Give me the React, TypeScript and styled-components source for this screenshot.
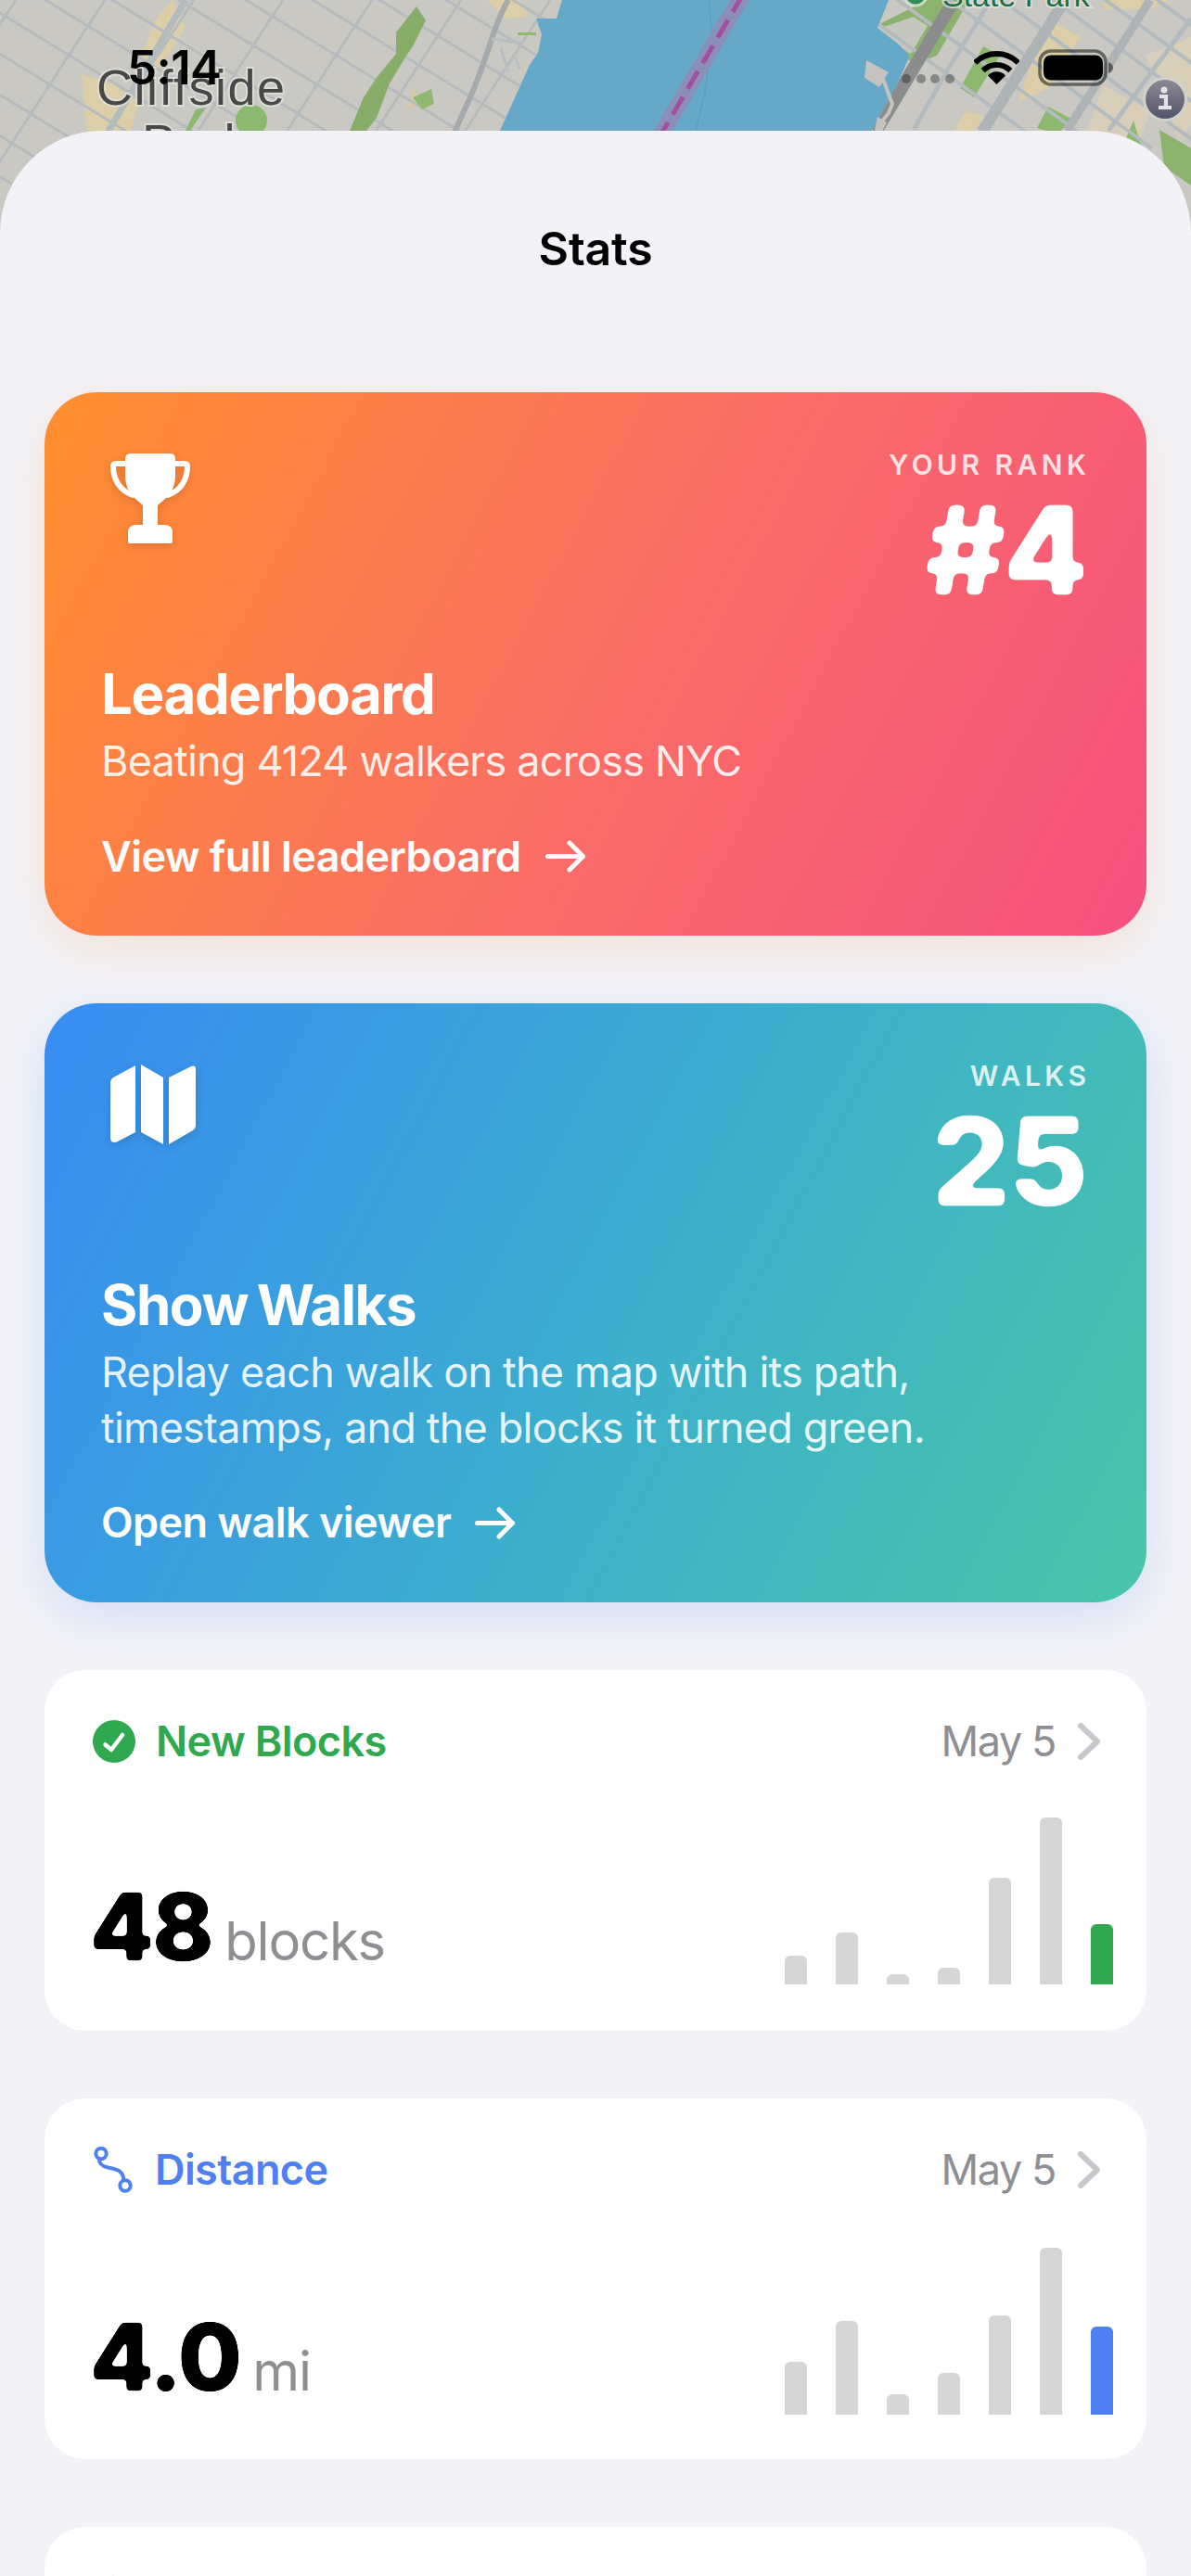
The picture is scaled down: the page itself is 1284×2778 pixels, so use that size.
import React from "react";
import styled, { createGlobalStyle } from "styled-components";

const Global = createGlobalStyle`
  html, body { margin: 0; padding: 0; background: #f2f2f7; }
  body { font-family: Inter, "Liberation Sans", sans-serif; -webkit-font-smoothing: antialiased; }
  #root { width: 1284px; height: 2778px; overflow: hidden; }
`;

const Page = styled.div`
  position: relative;
  width: 1284px;
  height: 2778px;
  overflow: hidden;
  background: #f2f2f7;
`;

const MapLayer = styled.svg`
  position: absolute;
  left: 0;
  top: 0;
`;

const FilterDefs = styled.svg`
  position: absolute;
  width: 0;
  height: 0;
`;

const StatusBar = styled.header`
  position: relative;
  height: 141px;
  box-sizing: border-box;
  padding: 43px 83px 0 137px;
  display: flex;
  justify-content: space-between;
  align-items: flex-start;
`;

const Time = styled.span`
  font-size: 51px;
  font-weight: 600;
  line-height: 60px;
  letter-spacing: -0.6px;
  color: #000;
`;

const StatusIcons = styled.div`
  display: flex;
  align-items: flex-start;
  margin-top: 10px;
`;

const Dots = styled.svg`
  margin: 26px 21px 0 0;
`;

const Wifi = styled.svg`
  margin-right: 20px;
`;

const Sheet = styled.main`
  position: relative;
  background: #f2f2f7;
  border-radius: 110px 110px 0 0;
  padding: 0 48px;
`;

const SheetTitle = styled.h1`
  margin: 0;
  padding-top: 97px;
  height: 282px;
  box-sizing: border-box;
  text-align: center;
  font-size: 50px;
  line-height: 60px;
  font-weight: 600;
  letter-spacing: -0.2px;
  color: #000;
`;

const CardStack = styled.div`
  display: flex;
  flex-direction: column;
  gap: 73px;
`;

const HeroCard = styled.section<{ $from: string; $via: string; $to: string; $glow: string }>`
  border-radius: 56px;
  padding: 60px 65px 58.5px 61px;
  background: linear-gradient(118deg, ${(p) => p.$from}, ${(p) => p.$via} 55%, ${(p) => p.$to});
  box-shadow: 0 16px 50px ${(p) => p.$glow};
  color: #fff;
`;

const HeroTop = styled.div`
  display: flex;
  justify-content: space-between;
  align-items: flex-start;
`;

const HeroIcon = styled.svg`
  margin: 6px 0 0 10px;
  filter: drop-shadow(0 3px 5px rgba(0, 0, 0, 0.14));
`;

const HeroMetric = styled.div`
  display: flex;
  flex-direction: column;
  align-items: flex-end;
`;

const MetricLabel = styled.span`
  font-size: 30px;
  line-height: 36px;
  font-weight: 600;
  letter-spacing: 4.4px;
  margin-right: -4.4px;
  color: rgba(255, 255, 255, 0.82);
`;

const MetricValue = styled.span`
  font-size: 132px;
  line-height: 110px;
  font-weight: 800;
  letter-spacing: -2px;
  margin-top: 19px;
  filter: url(#rounded);
`;

const HeroTitle = styled.h2`
  margin: 64px 0 7px;
  font-size: 60px;
  line-height: 72px;
  font-weight: 700;
  letter-spacing: -1.4px;
  word-spacing: -3px;
`;

const HeroText = styled.p`
  margin: 0;
  font-size: 45px;
  line-height: 59.5px;
  font-weight: 400;
  letter-spacing: -0.8px;
  color: rgba(255, 255, 255, 0.88);
`;

const HeroLink = styled.div`
  margin-top: 46px;
  display: flex;
  align-items: center;
  gap: 26px;
  font-size: 45px;
  line-height: 54px;
  font-weight: 600;
  letter-spacing: -0.55px;
`;

const StatCard = styled.section<{ $bottom: number }>`
  height: 389px;
  box-sizing: border-box;
  background: #fff;
  border-radius: 44px;
  padding: 50px 36px ${(p) => p.$bottom}px 52px;
  display: flex;
  flex-direction: column;
  justify-content: space-between;
`;

const StatHeader = styled.div`
  display: flex;
  justify-content: space-between;
  align-items: center;
  margin-right: 14px;
  height: 54px;
`;

const StatName = styled.div<{ $color: string }>`
  display: flex;
  align-items: center;
  gap: 22px;
  font-size: 45px;
  line-height: 54px;
  font-weight: 600;
  letter-spacing: -0.6px;
  color: ${(p) => p.$color};
`;

const StatDate = styled.div`
  display: flex;
  align-items: center;
  gap: 24px;
  font-size: 45px;
  line-height: 54px;
  font-weight: 400;
  letter-spacing: -1.4px;
  color: #8e8e93;
`;

const StatBody = styled.div`
  display: flex;
  justify-content: space-between;
  align-items: flex-end;
`;

const ValueRow = styled.div`
  display: flex;
  align-items: baseline;
  gap: 13px;
  margin: 0 0 12px -3px;
`;

const StatValue = styled.span`
  font-size: 100px;
  line-height: 100px;
  font-weight: 800;
  letter-spacing: -1.5px;
  color: #000;
  filter: url(#roundedSmall);
`;

const StatUnit = styled.span`
  font-size: 58px;
  line-height: 70px;
  font-weight: 400;
  letter-spacing: -1.2px;
  color: #8e8e93;
`;

const Chart = styled.div`
  display: flex;
  align-items: flex-end;
  gap: 31px;
  height: 180px;
`;

const Bar = styled.div<{ $color: string }>`
  width: 24px;
  border-radius: 6px 6px 0 0;
  background: ${(p) => p.$color};
`;

const FlameTip = styled.svg`
  display: block;
  margin: 2px 0 0 4px;
`;

const Chevron = () => (
  <svg width="24" height="40" viewBox="0 0 24 40" fill="none">
    <path d="M3 3 L21 20 L3 37" stroke="#c7c7cc" strokeWidth="6" strokeLinecap="round" strokeLinejoin="round" />
  </svg>
);

const Arrow = () => (
  <svg width="43" height="35" viewBox="0 0 43 35" fill="none">
    <path d="M2.5 17.5 H40.5 M26 3 L40.5 17.5 L26 32" stroke="#fff" strokeWidth="5" strokeLinecap="round" strokeLinejoin="round" />
  </svg>
);

const Trophy = () => (
  <HeroIcon width="86" height="97" viewBox="0 0 86 97" fill="none">
    <path
      d="M22 0 H64 Q70 0 70 6 V22 C70 36 66 42 60 48 L51 56 V77 H58 Q67 77 67 85 V95 Q67 97 65 97 H21 Q19 97 19 95 V85 Q19 77 28 77 H35 V56 L26 48 C20 42 16 36 16 22 V6 Q16 0 22 0 Z"
      fill="#fff"
    />
    <path
      d="M17 11 H6 Q3 11 3 14 C3 28 10 40 24 45 M69 11 H80 Q83 11 83 14 C83 28 76 40 62 45"
      stroke="#fff"
      strokeWidth="6"
      strokeLinecap="round"
    />
  </HeroIcon>
);

const MapFold = () => (
  <HeroIcon width="92" height="86" viewBox="0 0 92 86" fill="#fff">
    <path d="M27 1 V73 L8 83 Q0 86 0 79 V19 Q0 16 3 14 Z" />
    <path d="M33 0 L57 14 V86 L33 73 Z" />
    <path d="M63 14 L87 2 Q92 0 92 5 V66 Q92 69 89 71 L63 86 Z" />
  </HeroIcon>
);

const CheckBadge = () => (
  <svg width="46" height="46" viewBox="0 0 46 46">
    <circle cx="23" cy="23" r="23" fill="#2fa84f" />
    <path d="M13.5 26.5 L20 32 L32 16" fill="none" stroke="#fff" strokeWidth="4.5" strokeLinecap="round" strokeLinejoin="round" />
  </svg>
);

const RouteIcon = () => (
  <svg width="45" height="50" viewBox="0 0 45 50" fill="none" stroke="#4f80f2" strokeWidth="4" strokeLinecap="round">
    <circle cx="9" cy="7.5" r="5.7" />
    <circle cx="35" cy="42" r="5.7" />
    <path d="M7 13 C6.5 19 10.5 21 16.5 22.5 C25.5 24.5 32.5 25 33.5 36" />
  </svg>
);

const blockStreets = (x0: number, x1: number, y0: number, step: number, dx: number, dy: number) =>
  Array.from({ length: Math.ceil((x1 - x0) / step) + 1 }, (_, i) => {
    const x = x0 + i * step;
    return `M${x} ${y0} l${dx} ${dy}`;
  }).join(" ");

const MapBackdrop = () => (
  <MapLayer width="1284" height="300" viewBox="0 0 1284 300">
    <defs>
      <clipPath id="landLeft">
        <path d="M0 0 H606 L600 20 L578 20 L584 37 L580 57 L571 70 L539 141 L520 300 H0 Z" />
      </clipPath>
      <clipPath id="landRight">
        <path d="M958 0 H1284 V300 H900 L940 140 L966 93 L981 60 L968 47 L946 30 Z" />
      </clipPath>
      <linearGradient id="infoFill" x1="0" y1="0" x2="0" y2="1">
        <stop offset="0" stopColor="#8a8a96" />
        <stop offset="1" stopColor="#54546a" />
      </linearGradient>
    </defs>
    <rect width="1284" height="300" fill="#c9c8c3" />
    <rect x="500" width="500" height="300" fill="#66a8c8" />
    <g clipPath="url(#landLeft)">
      <rect width="620" height="300" fill="#c9c8c3" />
      <path d="M186 0 L200 30 L172 75 L152 60 L170 18 Z" fill="#dccfa8" />
      <path d="M88 80 L120 90 L150 110 L140 145 L100 170 L92 130 Z" fill="#dccfa8" />
      <path d="M505 0 H560 L570 18 L545 20 L525 0 Z" fill="#dccfa8" />
      <path d="M445 92 L455 112 L438 118 L444 100 Z" fill="#d6c9a6" />
      <path d={blockStreets(-360, 560, -30, 72, 400, 245)} stroke="#b6bcbe" strokeWidth="3" fill="none" />
      <path d={blockStreets(30, 540, -20, 96, -130, 200)} stroke="#b6bcbe" strokeWidth="3" fill="none" />
      <path d="M200 0 L112 150" stroke="#b4bbbe" strokeWidth="7" fill="none" />
      <path d="M548 0 C530 30 525 70 500 120 L478 170" stroke="#a5abad" strokeWidth="6" fill="none" />
      <path d="M449 7 L459 22 L445 50 L438 60 L420 90 L406 127 L395 141 L377 141 L392 105 L405 85 L427 58 L427 35 Z" fill="#87ad68" />
      <circle cx="271" cy="130" r="17" fill="#8cb870" />
      <path d="M211 118 L222 116 L205 141 L200 141 Z" fill="#8cb870" />
      <path d="M465 96 L468 112 L455 118 L445 105 Z" fill="#8fb873" />
      <path d="M558 35 H578 V38 H558 Z" fill="#8fb873" />
      <path d="M530 42 C540 42 550 46 565 46 M540 52 L548 78 M555 60 L560 74" stroke="#b9bfc1" strokeWidth="3" fill="none" />
    </g>
    <g clipPath="url(#landRight)">
      <rect x="900" width="384" height="300" fill="#c9c8c3" />
      <path d="M950 25 L1000 0 L1045 0 L1010 60 L985 70 L965 50 Z" fill="#8cb36d" />
      <path d="M950 30 L985 18 L1000 28 L982 58 L960 45 Z" fill="#c6c7bf" />
      <path d="M1060 50 L1078 60 L1050 105 L1035 95 Z" fill="#8cb870" />
      <path d="M1128 20 L1165 40 L1130 95 L1098 110 Z" fill="#dccfa8" />
      <path d="M1190 0 H1260 L1240 10 H1190 Z" fill="#dccfa8" />
      <path d="M1190 92 L1240 120 L1225 160 L1165 160 Z" fill="#d9cfb9" />
      <path d="M1130 115 L1155 128 L1140 145 L1118 138 Z" fill="#8cb870" />
      <path d="M1222 130 L1234 170 L1205 170 Z" fill="#8cb870" />
      <path d="M1040 120 L1060 125 L1040 160 L1025 150 Z" fill="#dccfa8" />
      <path d="M1235 60 L1284 40 V135 L1270 150 L1255 100 Z" fill="#d9cfb9" />
      <path d="M1250 140 L1284 160 V200 L1255 180 Z" fill="#8cb36d" />
      <path d={blockStreets(830, 1320, -60, 56, 300, 220)} stroke="#b4bbbe" strokeWidth="4" fill="none" />
      <path d="M1027 3 L944 142" stroke="#8b8d8c" strokeWidth="14" fill="none" />
      <path d="M1145 5 L1059 142" stroke="#aeb3b5" strokeWidth="12" fill="none" />
      <path d="M1065 5 L1020 78 L985 140" stroke="#b4bbbe" strokeWidth="5" fill="none" />
      <path d="M1240 0 L1150 141" stroke="#aeb3b5" strokeWidth="9" fill="none" />
      <path d="M1284 20 L1195 141" stroke="#b4bbbe" strokeWidth="5" fill="none" />
    </g>
    <path d="M934 65 L958 78 L948 94 L932 84 Z" fill="#c5c3be" />
    <path d="M950 80 L962 112 L958 122 L950 132" stroke="#c5c3be" strokeWidth="4" fill="none" />
    <path d="M946 126 L956 132 L950 144 L943 140 Z" fill="#c5c3be" />
    <path d="M764 0 L768 40 L760 100 L750 141" stroke="#5e9dc0" strokeWidth="1.5" fill="none" />
    <path d="M801 -6 L712 146" stroke="#8a8fb8" strokeWidth="18" fill="none" />
    <path d="M801 -6 L712 146" stroke="#a34f9f" strokeWidth="5" strokeDasharray="22 10" fill="none" />
    <g fontFamily="'Liberation Sans', Arial, sans-serif">
      <text x="104" y="113" fontSize="54" letterSpacing="1.5" fill="#484848" stroke="rgba(230,230,224,0.7)" strokeWidth="4" paintOrder="stroke">Cliffside</text>
      <text x="153" y="172" fontSize="54" letterSpacing="1.5" fill="#484848" stroke="rgba(230,230,224,0.7)" strokeWidth="4" paintOrder="stroke">Park</text>
      <text x="1016" y="7" fontSize="34" fill="#1f6f42" stroke="rgba(230,230,224,0.7)" strokeWidth="4" paintOrder="stroke">State Park</text>
    </g>
    <circle cx="987" cy="-6" r="12" fill="#2f8f55" stroke="rgba(230,230,224,0.8)" strokeWidth="3" />
    <circle cx="1256" cy="107" r="24" fill="#d2d2cc" />
    <circle cx="1256" cy="107" r="21" fill="url(#infoFill)" />
    <circle cx="1255" cy="97" r="3.5" fill="#e4e4e8" />
    <path d="M1250 104 H1257 V115 M1249 116 H1263" stroke="#e4e4e8" strokeWidth="4.2" fill="none" />
  </MapLayer>
);

type StatProps = {
  name: string;
  icon: React.ReactNode;
  color: string;
  value: string;
  unit: string;
  bars: number[];
  bottom: number;
};

const Stat = ({ name, icon, color, value, unit, bars, bottom }: StatProps) => (
  <StatCard $bottom={bottom}>
    <StatHeader>
      <StatName $color={color}>
        {icon}
        {name}
      </StatName>
      <StatDate>
        May 5
        <Chevron />
      </StatDate>
    </StatHeader>
    <StatBody>
      <ValueRow>
        <StatValue>{value}</StatValue>
        <StatUnit>{unit}</StatUnit>
      </ValueRow>
      <Chart>
        {bars.map((h, i) => (
          <Bar key={i} $color={i === bars.length - 1 ? color : "#d6d6d6"} style={{ height: h }} />
        ))}
      </Chart>
    </StatBody>
  </StatCard>
);

export default function App() {
  return (
    <Page>
      <Global />
      <FilterDefs aria-hidden="true">
        <filter id="rounded" x="-5%" y="-5%" width="110%" height="110%">
          <feGaussianBlur stdDeviation="3" />
          <feColorMatrix values="1 0 0 0 0  0 1 0 0 0  0 0 1 0 0  0 0 0 9 -3.6" />
        </filter>
        <filter id="roundedSmall" x="-5%" y="-5%" width="110%" height="110%">
          <feGaussianBlur stdDeviation="2.2" />
          <feColorMatrix values="1 0 0 0 0  0 1 0 0 0  0 0 1 0 0  0 0 0 9 -3.6" />
        </filter>
      </FilterDefs>
      <MapBackdrop />
      <StatusBar>
        <Time>5:14</Time>
        <StatusIcons>
          <Dots width="57" height="12" viewBox="0 0 57 12" fill="rgba(0,0,0,0.32)">
            <circle cx="5" cy="6" r="5" />
            <circle cx="21" cy="6" r="5" />
            <circle cx="36" cy="6" r="5" />
            <circle cx="52" cy="6" r="5" />
          </Dots>
          <Wifi width="49" height="38" viewBox="0 0 49 38" fill="none" stroke="#000" strokeWidth="6">
            <path d="M1.2 14.7 A33 33 0 0 1 47.8 14.7" />
            <path d="M9.7 23.2 A21 21 0 0 1 39.3 23.2" />
            <path d="M24.5 38 L15 28.5 A13 13 0 0 1 34 28.5 Z" fill="#000" stroke="none" />
          </Wifi>
          <svg width="82" height="40" viewBox="0 0 82 40" fill="none">
            <rect x="2" y="2" width="71" height="36" rx="12" stroke="rgba(0,0,0,0.5)" strokeWidth="3.5" />
            <rect x="6" y="6.5" width="64" height="27" rx="8" fill="#000" />
            <path d="M76 14 Q81 16 81 20 Q81 24 76 26 Z" fill="rgba(0,0,0,0.5)" />
          </svg>
        </StatusIcons>
      </StatusBar>
      <Sheet>
        <SheetTitle>Stats</SheetTitle>
        <CardStack>
          <HeroCard $from="#ff8f2e" $via="#fa6c68" $to="#f5507f" $glow="rgba(255, 150, 60, 0.16)">
            <HeroTop>
              <Trophy />
              <HeroMetric>
                <MetricLabel>YOUR RANK</MetricLabel>
                <MetricValue>#4</MetricValue>
              </HeroMetric>
            </HeroTop>
            <HeroTitle>Leaderboard</HeroTitle>
            <HeroText>Beating 4124 walkers across NYC</HeroText>
            <HeroLink>
              View full leaderboard
              <Arrow />
            </HeroLink>
          </HeroCard>
          <HeroCard $from="#388cf3" $via="#3cb0cc" $to="#49c6a8" $glow="rgba(60, 130, 240, 0.16)">
            <HeroTop>
              <MapFold />
              <HeroMetric>
                <MetricLabel>WALKS</MetricLabel>
                <MetricValue>25</MetricValue>
              </HeroMetric>
            </HeroTop>
            <HeroTitle>Show Walks</HeroTitle>
            <HeroText>
              Replay each walk on the map with its path,
              <br />
              timestamps, and the blocks it turned green.
            </HeroText>
            <HeroLink>
              Open walk viewer
              <Arrow />
            </HeroLink>
          </HeroCard>
          <Stat
            name="New Blocks"
            icon={<CheckBadge />}
            color="#2fa84f"
            value="48"
            unit="blocks"
            bars={[31, 56, 11, 18, 115, 180, 65]}
            bottom={50}
          />
          <Stat
            name="Distance"
            icon={<RouteIcon />}
            color="#4f80f2"
            value="4.0"
            unit="mi"
            bars={[57, 101, 22, 45, 107, 180, 95]}
            bottom={48}
          />
          <StatCard $bottom={48}>
            <FlameTip width="36" height="50" viewBox="0 0 36 50">
              <path d="M18 0 C20 12 34 20 34 33 C34 43 27 50 18 50 C9 50 2 43 2 33 C2 22 14 14 18 0 Z" fill="#f59a3c" />
            </FlameTip>
          </StatCard>
        </CardStack>
      </Sheet>
    </Page>
  );
}
